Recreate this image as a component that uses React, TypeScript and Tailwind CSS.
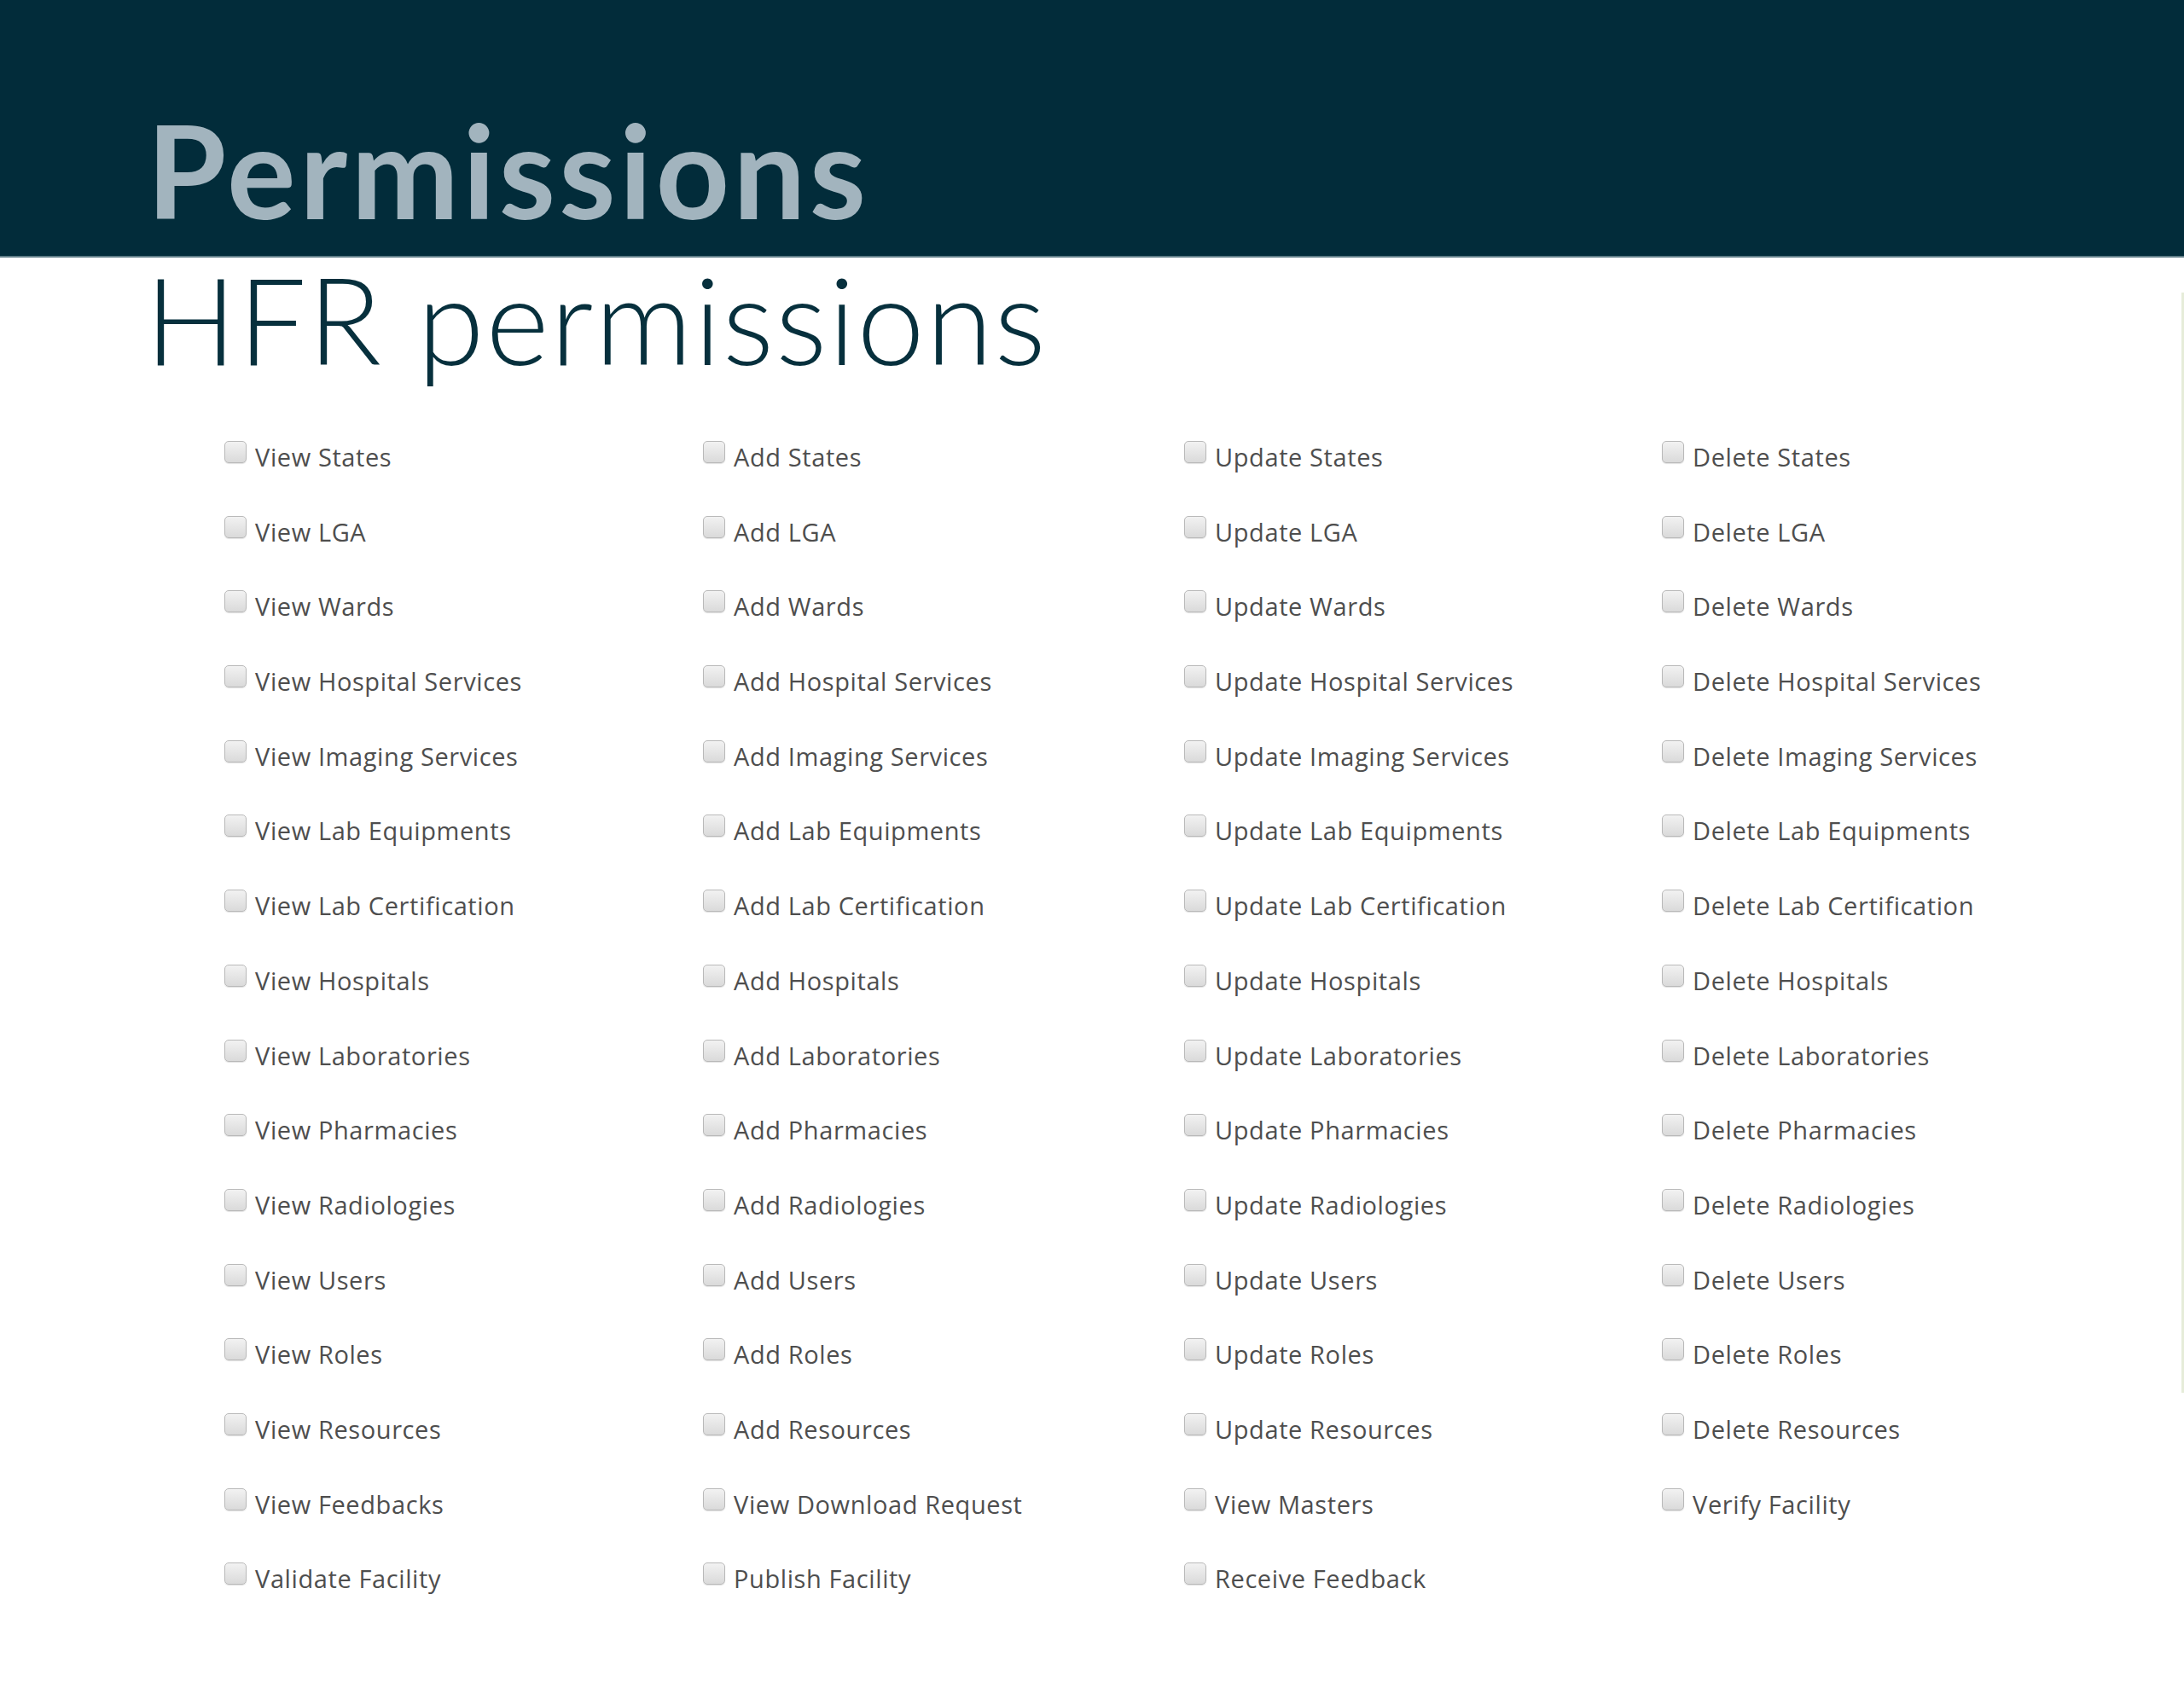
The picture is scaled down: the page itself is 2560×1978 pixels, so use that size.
import React from 'react';

const subjects = [
  'States',
  'LGA',
  'Wards',
  'Hospital Services',
  'Imaging Services',
  'Lab Equipments',
  'Lab Certification',
  'Hospitals',
  'Laboratories',
  'Pharmacies',
  'Radiologies',
  'Users',
  'Roles',
  'Resources',
];

const rows: (string | null)[][] = [
  ...subjects.map((s) => [`View ${s}`, `Add ${s}`, `Update ${s}`, `Delete ${s}`]),
  ['View Feedbacks', 'View Download Request', 'View Masters', 'Verify Facility'],
  ['Validate Facility', 'Publish Facility', 'Receive Feedback', null],
];

const Box = () => (
  <span className="block w-[26px] h-[26px] flex-shrink-0 rounded-[5px] border border-[#b9b9b9] bg-gradient-to-b from-[#f2f2f2] to-[#dadada] shadow-[0_1px_1px_rgba(0,0,0,0.12)]" />
);

export default function App() {
  return (
    <div className="w-[2560px] h-[1978px] bg-white overflow-hidden">
      <header className="h-[302px] bg-[#022c3a] border-b-2 border-[#5f7d87] pl-[172px] pt-[123px]">
        <h1 className="text-[151px] leading-none font-bold text-[#a2b4be] font-['Lato','Open_Sans',sans-serif] tracking-[4.2px]">
          Permissions
        </h1>
      </header>

      <div className="flex">
        <main className="flex-1">
          <h2 className="pl-[170px] text-[142px] leading-none font-light text-[#07303d] font-['Lato','Open_Sans',sans-serif] tracking-[1.8px]">
            HFR permissions
          </h2>

          <div className="mt-[73px] pl-[263px] grid grid-cols-[561px_564px_560px_500px]">
            {rows.map((row, r) =>
              row.map((label, c) => (
                <div key={`${r}-${c}`} className="h-[87.7px] flex items-start gap-[10px]">
                  {label && (
                    <>
                      <Box />
                      <span className="mt-[3px] text-[29px] leading-[32px] font-medium text-[#4e4e4e] font-['Open_Sans',sans-serif] tracking-[0.6px]">
                        {label}
                      </span>
                    </>
                  )}
                </div>
              ))
            )}
          </div>
        </main>
        <div className="w-[3px] h-[1290px] mt-[41px] bg-[#e6ecd9]" />
      </div>
    </div>
  );
}
